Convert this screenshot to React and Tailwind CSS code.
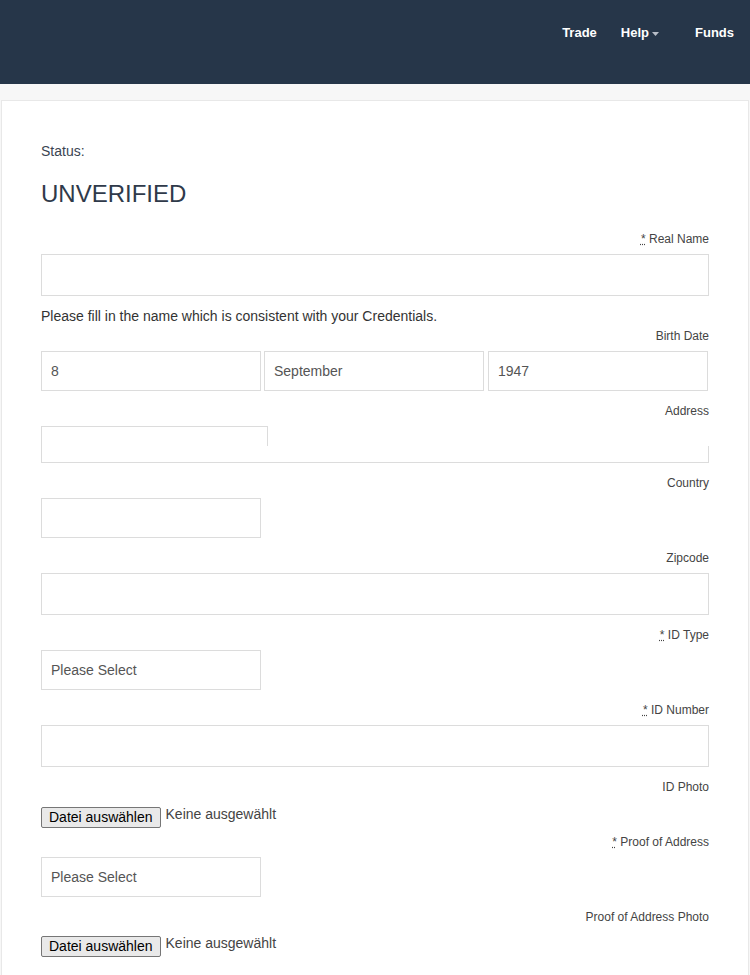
const font = { fontFamily: '"Liberation Sans", Arial, sans-serif' };

function Label({ children, required, className = '' }) {
  return (
    <div className={`text-right text-xs leading-4 text-[#444] ${className}`}>
      {required && (
        <abbr title="required" className="underline decoration-dotted">*</abbr>
      )}
      {required ? ' ' : ''}
      {children}
    </div>
  );
}

function TextInput({ value = '', className = '', h = 'h-[42px]' }) {
  return (
    <div className={`${h} border border-[#dcdcdc] bg-white px-[9px] flex items-center text-sm text-[#555] ${className}`}>
      {value}
    </div>
  );
}

function FileRow() {
  return (
    <div className="flex items-start gap-[5px]">
      <button className="h-[21px] px-[7px] border border-[#767676] bg-[#e9e9e9] text-sm leading-[19px] text-black rounded-[2px]">
        Datei auswählen
      </button>
      <span className="text-sm leading-4 text-[#444] -mt-px">Keine ausgewählt</span>
    </div>
  );
}

export default function App() {
  return (
    <div className="min-h-[975px] bg-[#f7f7f7]" style={font}>
      <header className="h-[84px] bg-[#263649] flex justify-end items-start pr-4">
        <nav className="flex items-center h-[66px] text-[13px] font-bold text-white">
          <a className="mr-6 ml-px">Trade</a>
          <a className="flex items-center mr-[35px]">
            Help
            <svg width="9" height="5" viewBox="0 0 9 5" className="ml-[2px] mt-[2px]">
              <path d="M1 0h7L4.5 4z" fill="#b8bec8" />
            </svg>
          </a>
          <a>Funds</a>
        </nav>
      </header>

      <div className="pt-4">
        <div className="mx-px bg-white border border-[#e8e8e8] px-[39px] pt-[40px] pb-10 min-h-[900px]">
          <div className="text-sm leading-5 text-[#3a4452]">Status:</div>
          <h2 className="mt-5 text-2xl leading-[26px] text-[#2f3a4a]">UNVERIFIED</h2>

          <Label required className="mt-[24px] mb-[7px]">Real Name</Label>
          <TextInput />
          <p className="mt-[10px] text-sm leading-5 text-[#333]">
            Please fill in the name which is consistent with your Credentials.
          </p>

          <Label className="mt-[2px] mb-[7px]">Birth Date</Label>
          <div className="flex">
            <TextInput h="h-10" value="8" className="w-[220px] mr-[3px]" />
            <TextInput h="h-10" value="September" className="w-[220px] mr-[4px]" />
            <TextInput h="h-10" value="1947" className="w-[220px]" />
          </div>

          <Label className="mt-[12px] mb-[7px]">Address</Label>
          <div className="h-[37px] border-l border-b border-[#dcdcdc] flex">
            <div className="w-[226px] h-5 border-t border-r border-[#dcdcdc]" />
            <div className="flex-1 flex flex-col">
              <div className="h-5" />
              <div className="flex-1 border-r border-[#dcdcdc]" />
            </div>
          </div>

          <Label className="mt-[12px] mb-[7px]">Country</Label>
          <TextInput h="h-10" className="w-[220px]" />

          <Label className="mt-[12px] mb-[7px]">Zipcode</Label>
          <TextInput />

          <Label required className="mt-[12px] mb-[7px]">ID Type</Label>
          <TextInput h="h-10" value="Please Select" className="w-[220px]" />

          <Label required className="mt-[12px] mb-[7px]">ID Number</Label>
          <TextInput />

          <Label className="mt-[12px] mb-[12px]">ID Photo</Label>
          <FileRow />

          <Label required className="mt-[6px] mb-[7px]">Proof of Address</Label>
          <TextInput h="h-10" value="Please Select" className="w-[220px]" />

          <Label className="mt-[12px] mb-[11px]">Proof of Address Photo</Label>
          <FileRow />
        </div>
      </div>
    </div>
  );
}
